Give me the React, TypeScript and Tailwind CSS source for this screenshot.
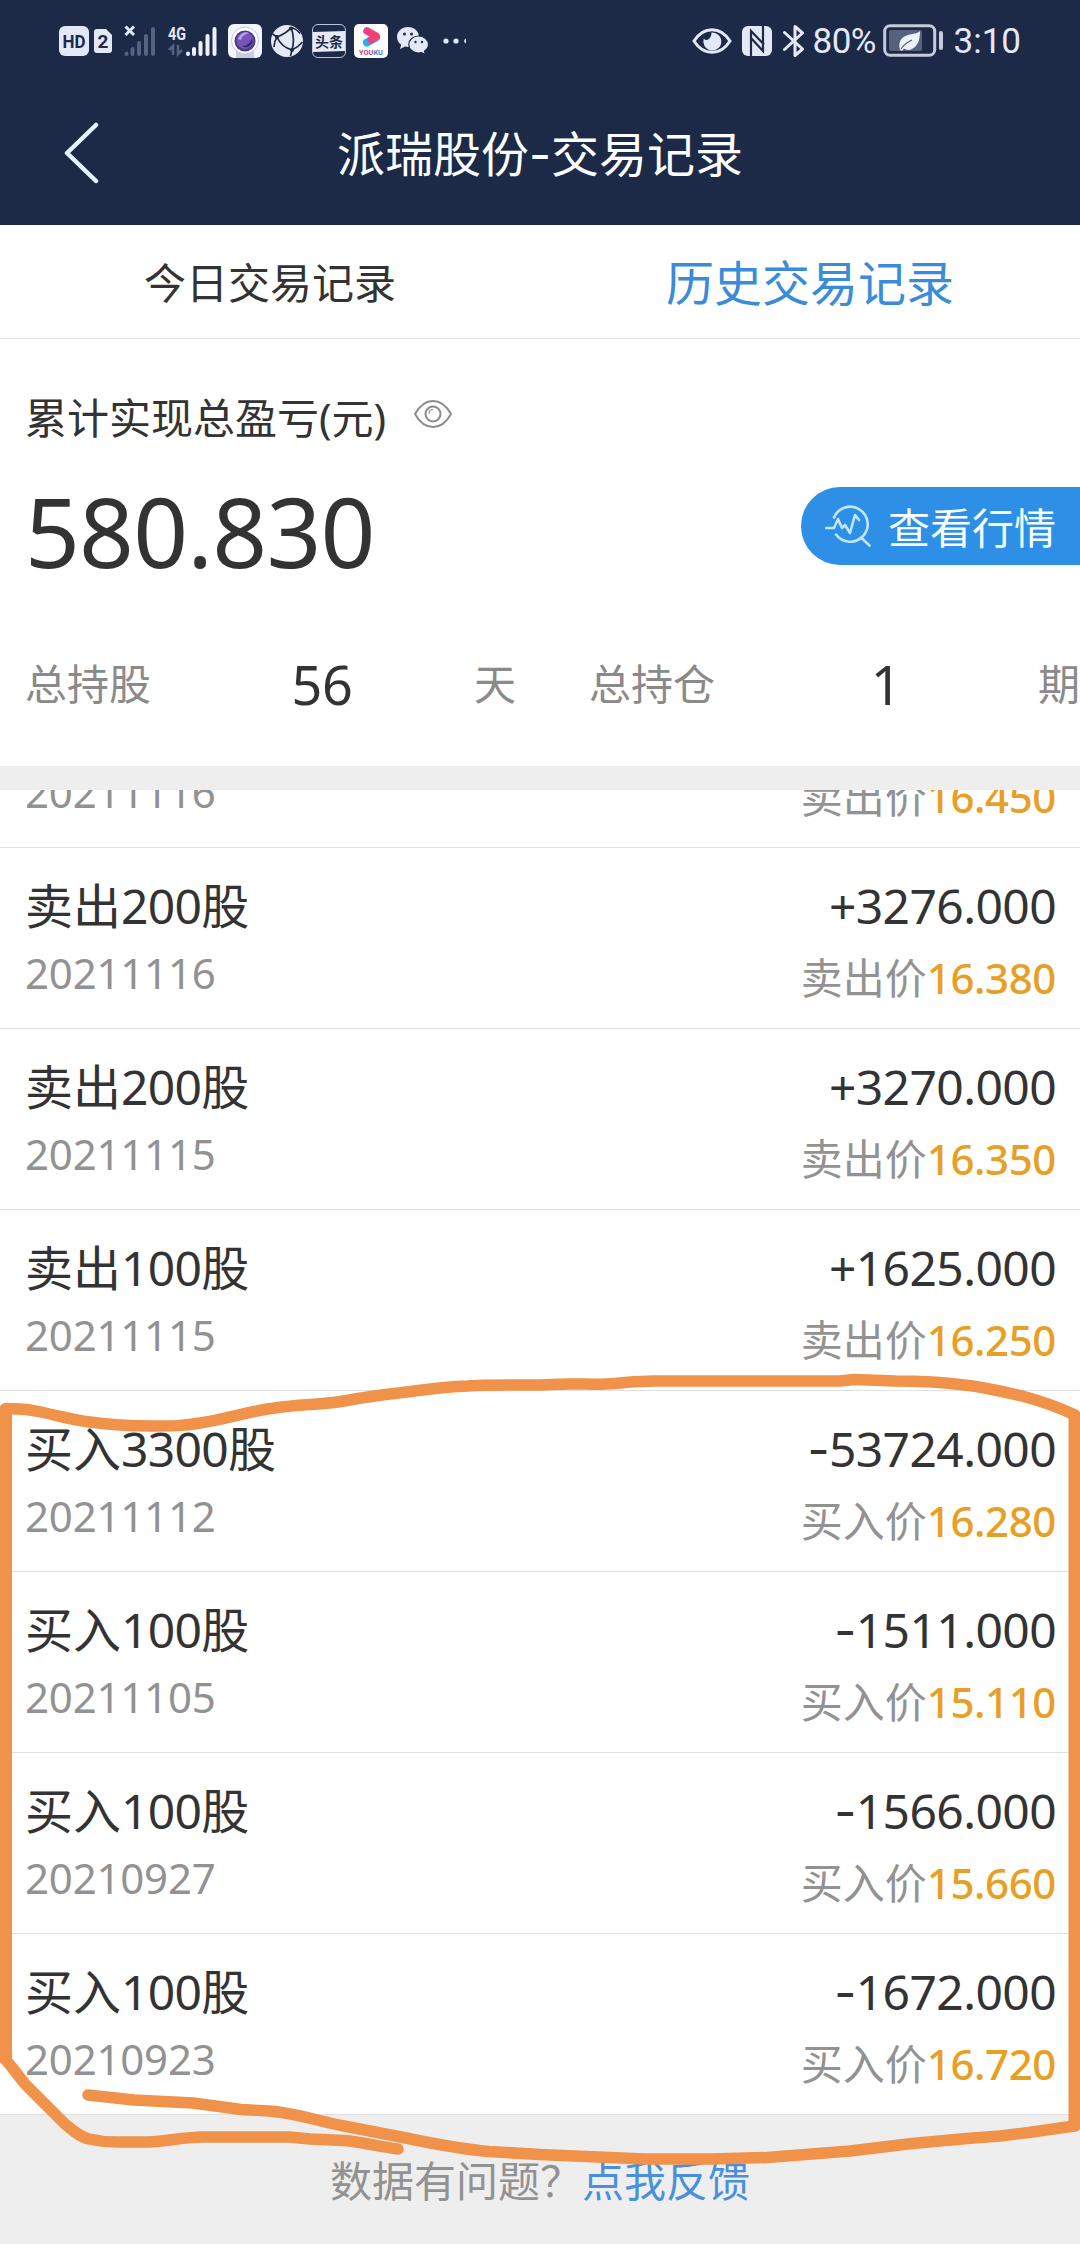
import React from "react";

type Trade = { side: "买入" | "卖出"; shares?: string; date: string; amount?: string; price: string };

// The first record is scrolled half out of view, so only its second line shows.
const trades: Trade[] = [
  { side: "卖出", date: "20211116", price: "16.450" },
  { side: "卖出", shares: "200", date: "20211116", amount: "+3276.000", price: "16.380" },
  { side: "卖出", shares: "200", date: "20211115", amount: "+3270.000", price: "16.350" },
  { side: "卖出", shares: "100", date: "20211115", amount: "+1625.000", price: "16.250" },
  { side: "买入", shares: "3300", date: "20211112", amount: "-53724.000", price: "16.280" },
  { side: "买入", shares: "100", date: "20211105", amount: "-1511.000", price: "15.110" },
  { side: "买入", shares: "100", date: "20210927", amount: "-1566.000", price: "15.660" },
  { side: "买入", shares: "100", date: "20210923", amount: "-1672.000", price: "16.720" },
];

function Hyphen() {
  return <span className="font-['Inter']">-</span>;
}

function SignalBars({ className }: { className: string }) {
  return (
    <g className={className} strokeWidth="4" strokeLinecap="round">
      <path d="M2.5 28.5v.5M8.500 24v5M15 18v11M22 11v18M29 4v25" />
    </g>
  );
}

function StatusBar() {
  return (
    <div className="flex h-[81px] items-center pl-[59px] pr-[59px] text-[#e3e8f6]">
      <svg className="h-[30px] w-[30px]" viewBox="0 0 30 30">
        <rect width="30" height="30" rx="6" fill="#e3e8f6" />
        <text x="15" y="22" textAnchor="middle" textLength="23" lengthAdjust="spacingAndGlyphs" className="fill-[#1d2a47] font-['Roboto'] text-[19px] font-bold">HD</text>
      </svg>
      <svg className="ml-[5px] h-6 w-[18px]" viewBox="0 0 18 24">
        <path d="M3 0h9l6 6v15a3 3 0 0 1-3 3H3a3 3 0 0 1-3-3V3a3 3 0 0 1 3-3z" fill="#e3e8f6" />
        <text x="9" y="18.500" textAnchor="middle" className="fill-[#1d2a47] font-['Roboto'] text-[19px] font-bold">2</text>
      </svg>
      <svg className="ml-3 h-8 w-[34px]" viewBox="0 0 34 32">
        <SignalBars className="stroke-[#56627e]" />
        <path d="M1.500 1.500l8.500 8.500M10 1.500L1.500 10" stroke="#e3e8f6" strokeWidth="3" />
      </svg>
      <svg className="ml-2.5 h-8 w-[52px] overflow-visible" viewBox="0 0 52 32">
        <text x="0" y="14.500" textLength="18" lengthAdjust="spacingAndGlyphs" className="fill-[#e3e8f6] font-['Roboto'] text-[19px] font-bold">4G</text>
        <path d="M5 30V21L1 25M10 20v9l4-4" fill="none" stroke="#56627e" strokeWidth="2.500" />
        <g transform="translate(17.500 0)">
          <SignalBars className="stroke-[#eef1fb]" />
        </g>
      </svg>
      <svg className="ml-2 h-[34px] w-[34px]" viewBox="0 0 34 34">
        <rect width="34" height="34" rx="6" fill="#f3f5fc" />
        <path d="M8 34v-7h18v7z" fill="#c7cce0" />
        <circle cx="17" cy="16.500" r="13.500" fill="#fff" stroke="#c4c8dc" strokeWidth="1" />
        <circle cx="17" cy="17" r="10.500" fill="#4a3a8a" />
        <circle cx="17" cy="16.500" r="8.500" fill="#7655b8" />
        <path d="M10 15c2-5 7-8 11-6-4 1-7 3-8 7z" fill="#b9a2e6" />
        <path d="M14 22c5 0 9-3 10-8 2 6-4 12-10 8z" fill="#33286a" />
      </svg>
      <svg className="ml-[9px] h-8 w-8" viewBox="0 0 32 32">
        <circle cx="16" cy="16" r="16" fill="#e6eaf6" />
        <g fill="none" stroke="#1d2a47" strokeWidth="1.700">
          <path d="M6 12C11 10 17 7 20 2.500M6 12c3 7 8 11 15 13M20 2.500c3 7 3 15 1 22.500M6 12L1.500 9M6 12c-2 3-3 6-3 10M20 2.500c4 1 7 3 9 6M21 25c4-2 8-5 10.500-8M21 25l-1.500 6" />
        </g>
        <g fill="#1d2a47">
          <circle cx="6" cy="12" r="2" />
          <circle cx="20" cy="3.500" r="2" />
          <circle cx="21" cy="25" r="2" />
        </g>
      </svg>
      <svg className="ml-[9px] h-[34px] w-[34px]" viewBox="0 0 34 34">
        <rect x=".5" y=".5" width="33" height="33" rx="5.500" fill="#1d2a47" stroke="#b5c6e0" />
        <path d="M1 8l32-1v20L1 28z" fill="#e6eaf6" />
        <text x="17" y="22.500" textAnchor="middle" className="fill-[#1d2a47] font-['Noto_Sans_CJK_SC'] text-[14px] font-bold">头条</text>
      </svg>
      <svg className="ml-2 h-[34px] w-[34px]" viewBox="0 0 34 34">
        <rect width="34" height="34" rx="5" fill="#fff" />
        <path d="M13 18.500l9-5" stroke="#25b0ee" strokeWidth="8" strokeLinecap="round" />
        <path d="M13 7l9 5" stroke="#f0417c" strokeWidth="7.500" strokeLinecap="round" />
        <path d="M22 13l-5 3" stroke="#f0417c" strokeWidth="7" strokeLinecap="round" />
        <text x="5" y="31" textLength="24" lengthAdjust="spacingAndGlyphs" className="font-['Roboto'] text-[7px] font-bold">
          <tspan fill="#c43c7c">YOU</tspan>
          <tspan fill="#3a8ec8">KU</tspan>
        </text>
      </svg>
      <svg className="ml-[9px] h-7 w-8" viewBox="0 0 32 28">
        <path d="M11 0C4.500 0 0 4.500 0 10c0 3.300 1.700 6 4.200 7.800L3 22l5-2.500c1 .3 2 .4 3 .4 6 0 11-4.400 11-9.900S17.500 0 11 0z" fill="#e3e8f6" />
        <path d="M21.500 9c-5.500 0-9.700 3.800-9.700 8.500S16 26 21.500 26c1 0 2-.1 3-.4l4 2-1-3.500c2.300-1.600 4-4 4-6.600C31.500 12.800 27 9 21.500 9z" fill="#e3e8f6" stroke="#1d2a47" strokeWidth="1.200" />
        <g fill="#1d2a47">
          <circle cx="7.500" cy="7" r="1.500" />
          <circle cx="14.500" cy="7" r="1.500" />
          <circle cx="18.500" cy="15" r="1.200" />
          <circle cx="25" cy="15" r="1.200" />
        </g>
      </svg>
      <svg className="ml-[14px] h-6 w-6" viewBox="0 0 24 24" fill="#e3e8f6">
        <circle cx="3" cy="12" r="2.600" />
        <circle cx="13" cy="12" r="2.600" />
        <path d="M23 9.500v5a2.600 2.600 0 0 1 0-5z" />
      </svg>

      <svg className="ml-auto h-[26px] w-[40px]" viewBox="0 0 40 26">
        <path d="M2 13C7 5 13 1.700 20 1.700S33 5 38 13c-5 8-11 11.300-18 11.300S7 21 2 13z" fill="none" stroke="#e3e8f6" strokeWidth="3" />
        <path d="M19.500 4.500c0 4-2 7-5 7.500-1 .2-2-.5-2.700-1.500a9 9 0 1 0 7.700-6z" fill="#e3e8f6" />
      </svg>
      <svg className="ml-2.5 h-[30px] w-[30px]" viewBox="0 0 30 30">
        <rect width="30" height="30" rx="6" fill="#e3e8f6" />
        <path d="M9 30V5l13 13.500M21 0v25L8.500 11.500" fill="none" stroke="#1d2a47" strokeWidth="2.200" />
      </svg>
      <svg className="ml-[11px] h-[34px] w-[22px]" viewBox="0 0 22 34">
        <path d="M1.500 8.500L19.500 25 12 31.500v-29L19.500 9 1.500 25.500" fill="none" stroke="#e3e8f6" strokeWidth="3" strokeLinejoin="round" strokeLinecap="round" />
      </svg>
      <span className="ml-2 mt-0.5 w-[67px] whitespace-nowrap font-['Roboto'] text-[35px] leading-[40px] tracking-[-0.5px]">80%</span>
      <svg className="ml-[3px] h-[33px] w-[62px]" viewBox="0 0 62 33">
        <rect x="1.700" y="1.700" width="50" height="29.500" rx="5.500" fill="none" stroke="#c5cbdd" strokeWidth="3" />
        <rect x="6" y="6" width="33" height="21" rx="2" fill="#56617c" />
        <path d="M17 26c-2-8 1-13 8-15 5-1.500 9-1 12-4 0 9-2 15-8 18-3 1.500-6 1-8-.5L19 27z" fill="#eef1fa" />
        <path d="M18 25c3-5 7-7 11-9" stroke="#56617c" strokeWidth="1.300" fill="none" />
        <path d="M58 9v15" stroke="#c5cbdd" strokeWidth="4" strokeLinecap="round" />
      </svg>
      <span className="ml-[9px] mt-0.5 whitespace-nowrap font-['Roboto'] text-[35px] leading-[40px]">3:10</span>
    </div>
  );
}

function TradeRow({ trade }: { trade: Trade }) {
  const { side, shares, date, amount, price } = trade;
  const negative = amount?.startsWith("-");
  return (
    <li className="flex h-[181px] shrink-0 justify-between border-b border-[#e0e0e0] pl-[25px] pr-6 pt-[23px]">
      <div>
        <div className="h-[70px] text-[48px] leading-[70px]">
          {shares && <>{side}<span className="tracking-[-0.7px]">{shares}</span>股</>}
        </div>
        <div className="text-[42px] leading-[64px] tracking-[-0.2px] text-[#929292]">{date}</div>
      </div>
      <div className="text-right">
        <div className="h-[70px] text-[48px] leading-[70px] tracking-[-0.6px]">
          {negative && <Hyphen />}
          {negative ? amount?.slice(1) : amount}
        </div>
        <div className="mt-[5px] text-[42px] leading-[64px] text-[#929292]">
          {side}价<span className="font-medium tracking-[-0.4px] text-[#e89f26]">{price}</span>
        </div>
      </div>
    </li>
  );
}

function Stat({ label, value, unit }: { label: string; value: string; unit: string }) {
  return (
    <div className="flex h-[80px] w-[491px] shrink-0 items-center text-[42px] leading-[60px] text-[#8a8a8a]">
      <span>{label}</span>
      <span className="flex-1 pl-[19px] text-center text-[54px] tracking-[-0.3px] text-[#333]">{value}</span>
      <span>{unit}</span>
    </div>
  );
}

/** Freehand marker loop drawn over the purchase records. */
function MarkerLoop() {
  return (
    <svg className="pointer-events-none absolute left-0 top-0 h-[2244px] w-[1080px]" viewBox="0 0 1080 2244" fill="none" stroke="#f0924a" strokeWidth="11.500" strokeLinecap="round" strokeLinejoin="round">
      <path d="M5 1409C20 1408 32 1410 41 1412C60 1416 72 1420 90 1422C112 1425 130 1426 151 1426C172 1426 184 1426 200 1423C226 1419 250 1411 275 1408C300 1404 322 1405 344 1401C364 1397 380 1395 399 1393C424 1390 440 1387 468 1386C500 1384 530 1386 551 1384.500C575 1383 590 1385 606 1384C625 1383 636 1381 654 1381H840L854 1379.500L895 1381C922 1381 942 1382 964 1385C984 1387 1005 1392 1022 1396C1045 1402 1060 1408 1075 1415" />
      <path d="M6 1409V2057" strokeWidth="12" />
      <path d="M1074.500 1416V2126" strokeWidth="12" />
      <path d="M4 2058C12 2066 18 2076 26 2085C33 2092 38 2097 45 2104L65 2124C72 2130 80 2137 89 2139C98 2141 107 2142 117 2142H148C168 2141 185 2137 203 2137H289L310 2139L344 2140.500C362 2142 380 2147 398 2149" />
      <path d="M88 2095L134 2100L193 2103L241 2109.500L270 2111C300 2114 322 2122 344 2126L406 2138C430 2143 460 2149 489 2151.500L540 2154.500L598 2157L645 2159H712L767 2157.500L850 2151L912 2143.500L967 2138.500L1000 2136L1029 2132.500L1074 2126" />
    </svg>
  );
}

export default function App() {
  return (
    <div className="relative flex h-[2244px] w-[1080px] flex-col overflow-hidden bg-white font-['Noto_Sans','Noto_Sans_CJK_SC',sans-serif] text-[#333]" lang="zh-CN">
      <header className="h-[225px] shrink-0 bg-[#1d2a47]">
        <StatusBar />
        <div className="flex h-[144px] items-center px-16">
          <svg className="h-[62px] w-9" viewBox="0 0 36 62">
            <path d="M32 3L3 31l29 28" fill="none" stroke="#e4f3fd" strokeWidth="4.500" strokeLinecap="round" strokeLinejoin="round" />
          </svg>
          <h1 className="mt-[3px] flex-1 pr-9 text-center text-[48px] leading-[70px] text-[#fbfeff]">派瑞股份<Hyphen />交易记录</h1>
        </div>
      </header>

      <nav className="grid h-[114px] shrink-0 grid-cols-2 items-center border-b border-[#e0e0e0] pt-0.5 text-center">
        <span className="text-[42px] leading-[70px]">今日交易记录</span>
        <span className="text-[48px] leading-[70px] text-[#3a8cd8]">历史交易记录</span>
      </nav>

      <section className="h-[427px] shrink-0 pl-[25px] pt-[49px]">
        <div className="flex items-center text-[42px] leading-[60px]">
          <span>累计实现总盈亏(元)</span>
          <svg className="-mt-2 ml-7 h-7 w-[38px]" viewBox="0 0 38 28" fill="none" stroke="#8c8c8c" strokeWidth="2">
            <path d="M1 14C6 5 12 1 19 1s13 4 18 13c-5 9-11 13-18 13S6 23 1 14z" />
            <circle cx="19" cy="14" r="7.500" />
            <path d="M15 13.500c0-2.500 1.500-4 4-4" strokeWidth="1.200" />
          </svg>
        </div>
        <div className="mt-8 flex h-[92px] items-center justify-between">
          <span className="mt-2.5 text-[96px] leading-[100px] tracking-[-0.8px]">580.830</span>
          <button className="flex h-[78px] w-[279px] items-center rounded-l-full bg-[#2d8fe6] pl-6 text-[42px] leading-[60px] text-[#f6fdff]">
            <svg className="h-[42px] w-[46px]" viewBox="0 0 46 42" fill="none" stroke="#bfe6fd" strokeWidth="2.600" strokeLinecap="round" strokeLinejoin="round">
              <path d="M9 12.500a17.500 17.500 0 1 1 2 17M36 32.500l8.500 8" />
              <path d="M1 23h8l4-9 4 9 3-3 5 8 5-18 4 5" />
            </svg>
            <span className="ml-[17px] mt-1">查看行情</span>
          </button>
        </div>
        <div className="mt-[72px] flex gap-[73px]">
          <Stat label="总持股" value="56" unit="天" />
          <Stat label="总持仓" value="1" unit="期" />
        </div>
      </section>

      <div className="h-6 shrink-0 bg-[#eee]" />

      <div className="h-[1325px] shrink-0 overflow-hidden">
        <ul className="-mt-[123px] flex flex-col">
          {trades.map((t, i) => (
            <TradeRow key={i} trade={t} />
          ))}
        </ul>
      </div>

      <footer className="flex flex-1 items-center justify-center bg-[#eee] pt-[3px] text-[42px] leading-[60px] text-[#929292]">
        数据有问题？<a className="text-[#4a8fdb]">点我反馈</a>
      </footer>

      <MarkerLoop />
    </div>
  );
}
